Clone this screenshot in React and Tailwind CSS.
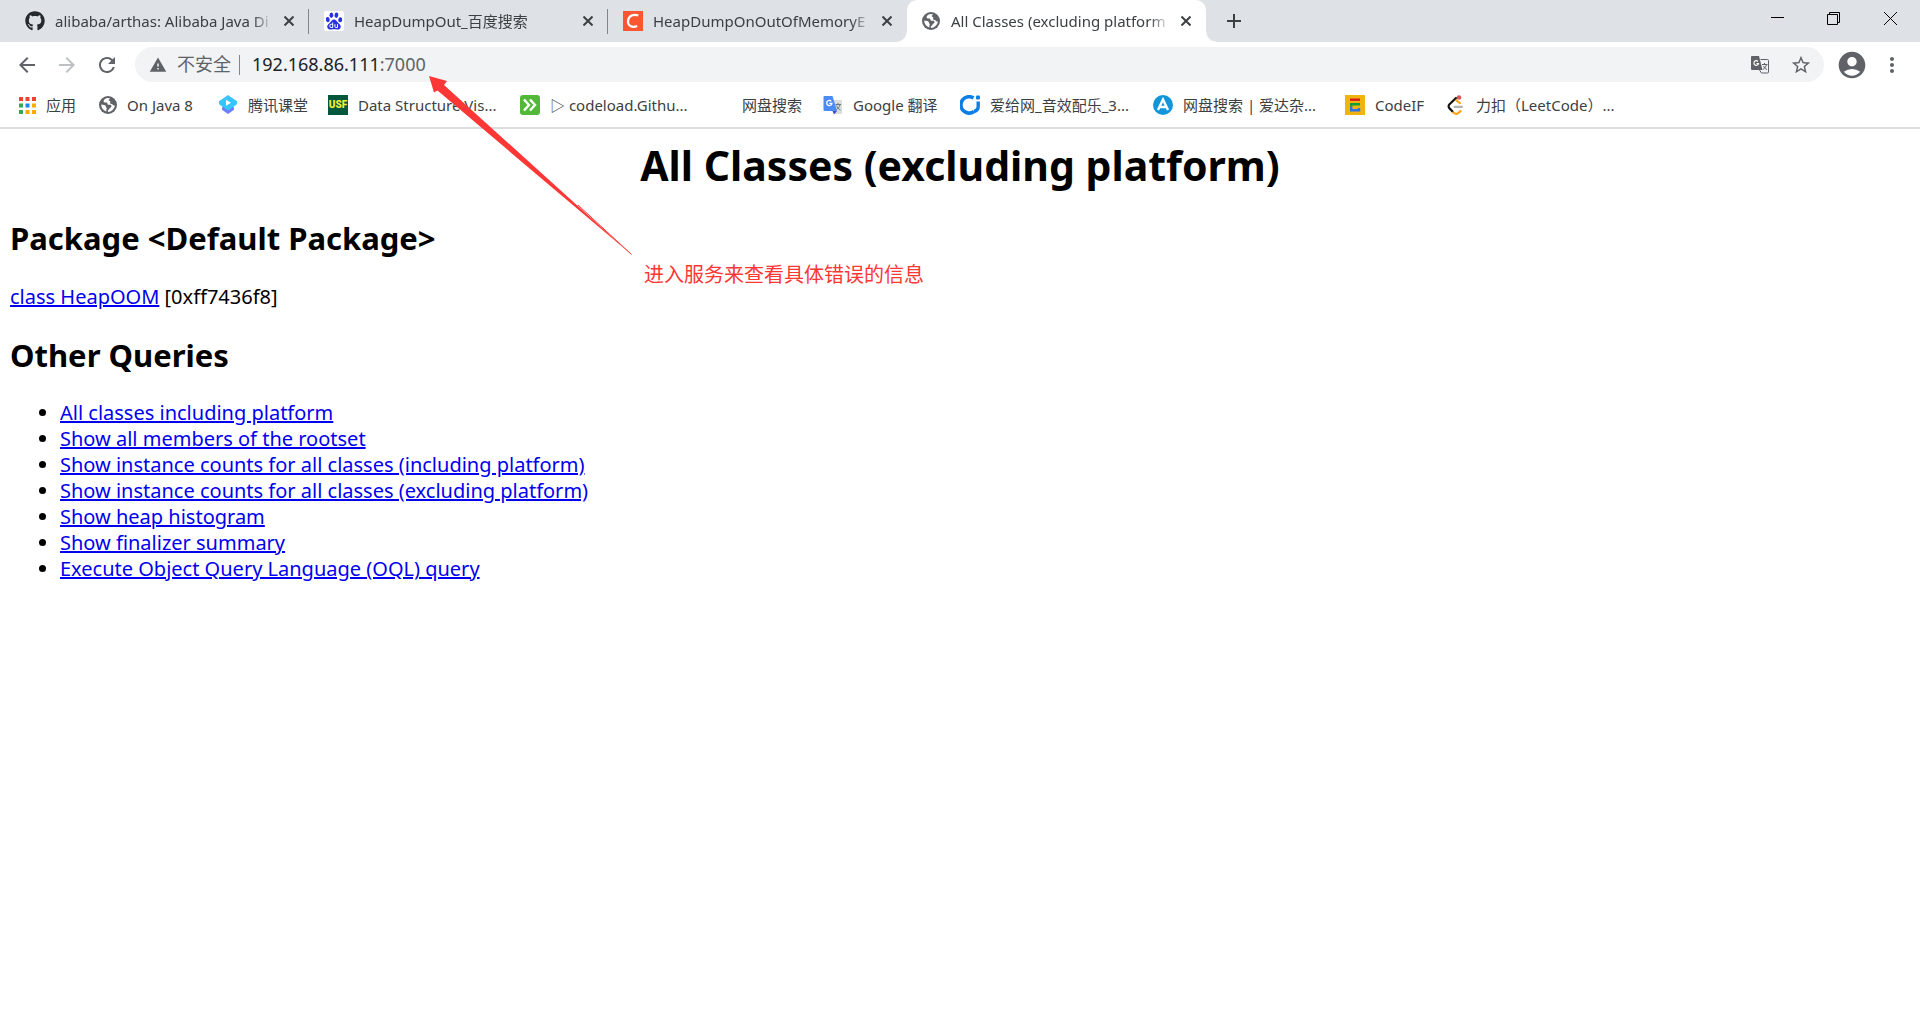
import { FaGithub } from "react-icons/fa";
import {
  MdArrowBack,
  MdArrowForward,
  MdRefresh,
  MdWarning,
  MdStarBorder,
  MdAccountCircle,
  MdMoreVert,
} from "react-icons/md";

function GlobeIcon() {
  return (
    <svg viewBox="0 0 18 18" className="size-[18px] shrink-0" aria-hidden="true">
      <circle cx="9" cy="9" r="9" fill="#5f6368" />
      <path
        d="M10.6 2.2 8 2C5.500 3 4.600 4 4.600 5.300c0 1.200 1 1.300 2.200 1.300 1.400 0 1.400.4 1.700 1.300.3.800 1 1 2.300.9 1.400-.1 1.800.6 1.600 1.700-.2 1-1.200.9-1.700 1.800-.5.900-.9 1.600-1.900 2.200l.2 1.500c3.400-.4 6.400-3 6.900-6.600-1 .2-2-.1-2.400-.9-.5-.9-1.600-.2-2.200-1-.6-.9.300-1.500-.1-2.300-.4-.7-1.600-.3-1.500-1.300.1-.8 1.300-.7 1.300-1.700Z"
        fill="#fff"
      />
      <path
        d="M2.200 8.600c1.400.3 2.900.2 4 .8 1.100.6.500 1.700 1.300 2.300.7.500.2 1.200-.2 1.700l.1 2.100c-2.900-.7-5.200-3.300-5.200-6.900Z"
        fill="#fff"
      />
    </svg>
  );
}

function BaiduIcon() {
  return (
    <svg viewBox="0 0 20 20" className="size-5 shrink-0" aria-hidden="true">
      <rect width="20" height="20" rx="2" fill="#fff" />
      <g fill="#2932e1">
        <ellipse cx="3.800" cy="8.600" rx="1.900" ry="2.600" transform="rotate(-12 3.800 8.600)" />
        <ellipse cx="7.400" cy="4.200" rx="1.900" ry="2.700" />
        <ellipse cx="12.400" cy="4.200" rx="1.900" ry="2.700" transform="rotate(8 12.400 4.200)" />
        <ellipse cx="16.200" cy="8.800" rx="1.900" ry="2.500" transform="rotate(10 16.200 8.800)" />
        <path d="M10 8.500c2.200 0 2.700 2 4.300 3.400 1.700 1.500 2.700 2.600 2.400 4.300-.3 2-2 2.500-3.700 2.300-1-.1-2-.3-3-.3s-2 .2-3 .3c-1.700.2-3.400-.3-3.700-2.300-.3-1.700.7-2.800 2.400-4.300C7.300 10.500 7.800 8.500 10 8.500Z" />
      </g>
      <path
        d="M8.700 11.500v5H7.300a1.500 1.500 0 0 1 0-3.200h1.400M10.900 13.200v2.200c0 .8.400 1.100 1.200 1.100h1.400v-3.300"
        fill="none"
        stroke="#fff"
        strokeWidth="1"
      />
    </svg>
  );
}

function CsdnIcon() {
  return (
    <svg viewBox="0 0 20 20" className="size-5 shrink-0" aria-hidden="true">
      <rect width="20" height="20" fill="#fc5531" />
      <path
        d="M15.300 4.600C11 2.600 5.400 4.500 5 10.100c-.3 5.300 4.800 6.700 9.200 4.900"
        fill="none"
        stroke="#fff"
        strokeWidth="2.200"
      />
    </svg>
  );
}

function AppsIcon() {
  const rows = [
    ["#ea4335", "#ea4335", "#ea4335"],
    ["#34a853", "#1a88f4", "#fbab04"],
    ["#34a853", "#fbab04", "#fbab04"],
  ];
  return (
    <svg viewBox="0 0 17 17" className="size-[17px] shrink-0" aria-hidden="true">
      {rows.map((row, y) =>
        row.map((color, x) => (
          <rect key={`${x}-${y}`} x={x * 6.500} y={y * 6.500} width="4" height="4" fill={color} />
        ))
      )}
    </svg>
  );
}

function TencentIcon() {
  return (
    <svg viewBox="0 0 20 20" className="size-5 shrink-0" aria-hidden="true">
      <path d="M4 12.500 10 9l6 3.500v2.300L10 19l-6-4.200Z" fill="#6e7dfa" />
      <path d="M10 0 19 6.200v3L10 15.500 1 9.200v-3Z" fill="#35c6fb" />
      <path d="M8 4.800 13 7.700 8 10.800Z" fill="#fff" />
    </svg>
  );
}

function UsfIcon() {
  return (
    <span
      className="flex h-5 w-5 shrink-0 items-center justify-center bg-[#00573c] font-['Roboto',sans-serif] text-[10px] leading-5 font-black text-[#f5ee31]"
      aria-hidden="true"
    >
      USF
    </span>
  );
}

function ChevronsIcon() {
  return (
    <svg viewBox="0 0 20 20" className="size-5 shrink-0" aria-hidden="true">
      <rect width="20" height="20" rx="3" fill="#52b838" />
      <path d="m4 4.500 5 5.500-5 5.500M10 4.500l5 5.500-5 5.500" fill="none" stroke="#fff" strokeWidth="2.400" />
    </svg>
  );
}

function GoogleTranslateIcon() {
  return (
    <svg viewBox="0 0 20 20" className="size-5 shrink-0" aria-hidden="true">
      <path d="M8 5h10a1 1 0 0 1 1 1v12a1 1 0 0 1-1 1h-6Z" fill="#dcdcdc" />
      <path d="M9.500 16H14l-3 3.500Z" fill="#3a4fbf" />
      <path d="M1.500 1h8l4.500 15H1.500a1 1 0 0 1-1-1V2a1 1 0 0 1 1-1Z" fill="#4c8bf5" />
      <path d="M8.300 6.300a2.600 2.600 0 1 0 .6 2H6.300" fill="none" stroke="#fff" strokeWidth="1.300" />
      <path
        d="M12.500 9.500H18M15 8v1.500M17 9.500c-.5 2.500-2 4.300-4 5.500M13.500 10.500c.8 2 2 3.500 4 4.500"
        fill="none"
        stroke="#607d8b"
        strokeWidth="1"
      />
    </svg>
  );
}

function AigeiIcon() {
  return (
    <svg viewBox="0 0 20 20" className="size-5 shrink-0" aria-hidden="true">
      <path d="M13.500 3A8.200 8.200 0 1 0 14 16.500" fill="none" stroke="#0b7fe6" strokeWidth="3.600" />
      <path d="M18.200 6.500v5c0 2.500-1.700 4.300-4.200 5" fill="none" stroke="#0b7fe6" strokeWidth="3.400" />
      <rect x="16" y="0.500" width="4" height="4" rx="1" fill="#0b7fe6" />
    </svg>
  );
}

function AidaIcon() {
  return (
    <svg viewBox="0 0 20 20" className="size-5 shrink-0" aria-hidden="true">
      <circle cx="10" cy="10" r="10" fill="#1296db" />
      <path d="m5 15 5-10.500L15 15M7 12h6" fill="none" stroke="#fff" strokeWidth="2.400" />
    </svg>
  );
}

function CodeIfIcon() {
  return (
    <svg viewBox="0 0 20 20" className="size-5 shrink-0" aria-hidden="true">
      <rect width="20" height="20" fill="#f0b310" />
      <path d="M5 4.700h10" stroke="#d7191c" strokeWidth="2.400" />
      <path d="M15 9.200H6.200v2.600" fill="none" stroke="#0f9d39" strokeWidth="2.400" />
      <path d="M6.200 11.800v3.400H14V13" fill="none" stroke="#2f6fe8" strokeWidth="2.400" />
    </svg>
  );
}

function LeetCodeIcon() {
  return (
    <svg viewBox="0 0 20 20" className="size-5 shrink-0" aria-hidden="true" fill="none" strokeLinecap="round">
      <path d="m10 3-6.500 6.300c-1.200 1.200-1.200 2.900 0 4.100l3.300 3.400" stroke="#111" strokeWidth="2.200" />
      <path d="m10.500 5.500 3.500 2.700M7.300 17.500c2.200 2 4.300 1.800 6.200-.5l1-1" stroke="#ffa116" strokeWidth="2.200" />
      <path d="M8.500 11.800H16" stroke="#b3b3b3" strokeWidth="2.200" />
      <circle cx="13" cy="2.500" r="2.300" fill="#e0525a" />
    </svg>
  );
}

function PageTranslateIcon() {
  return (
    <svg viewBox="0 0 20 20" className="size-5" aria-hidden="true">
      <path d="M2 1h7l3.500 14H2a1 1 0 0 1-1-1V2a1 1 0 0 1 1-1Z" fill="#5f6368" />
      <path d="M10.500 4.500h7a1 1 0 0 1 1 1V17a1 1 0 0 1-1 1h-6L9.500 15" fill="none" stroke="#5f6368" />
      <path d="M8 6.500a2.300 2.300 0 1 0 .5 2H6.500" fill="none" stroke="#fff" strokeWidth="1.200" />
      <path
        d="M12 9.500h5.500M14.500 8v1.500M16.500 9.500c-.5 2-1.500 3.800-3.500 5M13.500 11c.8 1.600 1.800 2.800 3.500 3.600"
        fill="none"
        stroke="#5f6368"
      />
    </svg>
  );
}

const tabs = [
  { title: "alibaba/arthas: Alibaba Java Di", icon: <FaGithub className="size-5 shrink-0 text-[#24292e]" /> },
  { title: "HeapDumpOut_百度搜索", icon: <BaiduIcon /> },
  { title: "HeapDumpOnOutOfMemoryE", icon: <CsdnIcon /> },
];

function CloseButton() {
  return (
    <button type="button" aria-label="关闭标签页" className="ml-[6px] flex size-5 shrink-0 items-center justify-center">
      <svg viewBox="0 0 10 10" className="size-[10px]" aria-hidden="true">
        <path d="m.500.500 9 9M9.500.500l-9 9" stroke="#3c4043" strokeWidth="2" />
      </svg>
    </button>
  );
}

const fade =
  "min-w-0 flex-1 whitespace-nowrap [mask-image:linear-gradient(to_right,black_calc(100%-20px),transparent)]";

function TabStrip() {
  return (
    <header className="flex h-[42px] bg-[#dee1e6] text-[#3c4043]">
      <div className="flex min-w-0 pl-[10px]">
        {tabs.map((tab, i) => (
          <div key={tab.title} className="flex w-[299px] items-center">
            <div className="flex min-w-0 flex-1 items-center pr-[9px] pl-[15px]">
              {tab.icon}
              <span className={`ml-[10px] ${fade}`}>{tab.title}</span>
              <CloseButton />
            </div>
            <span className={i < 2 ? "h-[25px] w-px bg-[#80868b]" : "w-px"} />
          </div>
        ))}
        <div className="relative flex w-[299px] items-center rounded-t-[10px] bg-white pr-[10px] pl-[15px]">
          <span className="absolute bottom-0 -left-[10px] size-[10px] bg-[radial-gradient(circle_at_0_0,transparent_9px,white_10px)]" />
          <span className="absolute -right-[10px] bottom-0 size-[10px] bg-[radial-gradient(circle_at_100%_0,transparent_9px,white_10px)]" />
          <GlobeIcon />
          <span className={`ml-[11px] ${fade}`}>All Classes (excluding platform</span>
          <CloseButton />
        </div>
      </div>
      <button type="button" aria-label="打开新的标签页" className="ml-[18px] flex w-5 items-center justify-center">
        <svg viewBox="0 0 16 16" className="size-4" aria-hidden="true">
          <path d="M8 1v14M1 8h14" stroke="#3c4043" strokeWidth="2" />
        </svg>
      </button>
      <div className="ml-auto flex h-9">
        <button type="button" aria-label="最小化" className="flex w-14 items-center justify-center">
          <svg viewBox="0 0 13 13" className="size-[13px]" aria-hidden="true">
            <path d="M0 5.500h13" stroke="#000" />
          </svg>
        </button>
        <button type="button" aria-label="还原" className="flex w-14 items-center justify-center">
          <svg viewBox="0 0 13 13" className="size-[13px]" aria-hidden="true">
            <path d="M.500 2.500h10v10H.500ZM2.500 2.500V.500h10v10h-2" fill="none" stroke="#000" />
          </svg>
        </button>
        <button type="button" aria-label="关闭" className="flex w-[59px] items-center justify-center">
          <svg viewBox="0 0 13 13" className="size-[13px]" aria-hidden="true">
            <path d="m0 0 13 13M13 0 0 13" stroke="#000" />
          </svg>
        </button>
      </div>
    </header>
  );
}

function Toolbar() {
  return (
    <nav aria-label="工具栏" className="flex h-[45px] items-center pr-4 pl-[15px] text-[#5f6368]">
      <button type="button" aria-label="返回" className="mr-4"><MdArrowBack className="size-6" /></button>
      <button type="button" aria-label="前进" className="mr-4 text-[#bdc1c6]"><MdArrowForward className="size-6" /></button>
      <button type="button" aria-label="重新加载" className="mr-4"><MdRefresh className="size-6" /></button>
      <div className="flex h-[35px] min-w-0 flex-1 items-center rounded-full bg-[#f1f3f4] pr-3 pl-[14px] text-[18px]">
        <MdWarning className="size-[18px] shrink-0" />
        <span className="ml-[10px] shrink-0">不安全</span>
        <span className="mr-3 ml-2 h-5 w-px shrink-0 bg-[#80868b]" />
        <div className="grid min-w-0 flex-1 items-center">
          <input
            aria-label="地址"
            defaultValue="192.168.86.111:7000"
            className="col-start-1 row-start-1 w-full bg-transparent text-transparent outline-none"
          />
          <span aria-hidden="true" className="pointer-events-none col-start-1 row-start-1">
            <span className="text-[#202124]">192.168.86.111</span>:7000
          </span>
        </div>
        <button type="button" aria-label="翻译此页" className="mr-5"><PageTranslateIcon /></button>
        <button type="button" aria-label="为此标签页添加书签"><MdStarBorder className="size-[22px]" /></button>
      </div>
      <button type="button" aria-label="用户" className="ml-3"><MdAccountCircle className="size-8" /></button>
      <button type="button" aria-label="自定义及控制" className="ml-3"><MdMoreVert className="size-6" /></button>
    </nav>
  );
}

const bookmarks = [
  { name: "应用", icon: <AppsIcon />, width: "w-[80px]" },
  { name: "On Java 8", icon: <GlobeIcon />, width: "w-[119px]" },
  { name: "腾讯课堂", icon: <TencentIcon />, width: "w-[110px]" },
  { name: "Data Structure Vis...", icon: <UsfIcon />, width: "w-[192px]" },
  { name: "▷ codeload.Githu...", icon: <ChevronsIcon />, width: "w-[192px]" },
  { name: "网盘搜索", icon: <span className="size-5" />, width: "w-[111px]" },
  { name: "Google 翻译", icon: <GoogleTranslateIcon />, width: "w-[137px]" },
  { name: "爱给网_音效配乐_3...", icon: <AigeiIcon />, width: "w-[193px]" },
  { name: "网盘搜索 | 爱达杂...", icon: <AidaIcon />, width: "w-[192px]" },
  { name: "CodeIF", icon: <CodeIfIcon />, width: "w-[101px]" },
  { name: "力扣（LeetCode）...", icon: <LeetCodeIcon />, width: "w-[192px]" },
];

function BookmarksBar() {
  return (
    <nav
      aria-label="书签"
      className="flex h-[42px] items-center overflow-hidden border-b-2 border-[#dadce0] pb-1 pl-[19px] text-[#3c4043]"
    >
      {bookmarks.map((b, i) => (
        <a key={i} href="#" className={`flex shrink-0 items-center gap-[10px] whitespace-nowrap ${b.width}`}>
          {b.icon}
          {b.name}
        </a>
      ))}
    </nav>
  );
}

const queries = [
  "All classes including platform",
  "Show all members of the rootset",
  "Show instance counts for all classes (including platform)",
  "Show instance counts for all classes (excluding platform)",
  "Show heap histogram",
  "Show finalizer summary",
  "Execute Object Query Language (OQL) query",
];

function Annotation() {
  return (
    <div className="pointer-events-none absolute top-[75px] left-[428px] text-[#fd3636]">
      <svg width="206" height="184" viewBox="0 0 206 184" aria-hidden="true">
        <path d="M1 1 19 6 16 10 204 180 9.500 15.500 6 17.500Z" fill="currentColor" />
        <path d="M150 130 203.500 179.500" stroke="currentColor" />
      </svg>
      <p className="ml-[216px] text-[20px] leading-8 whitespace-nowrap">进入服务来查看具体错误的信息</p>
    </div>
  );
}

export default function App() {
  return (
    <div className="relative min-h-screen bg-white font-['Noto_Sans','Noto_Sans_CJK_SC',sans-serif] text-[15px]">
      <TabStrip />
      <Toolbar />
      <BookmarksBar />
      <main className="px-[10px] pt-2 text-[20px] leading-[26px] text-black">
        <h1 className="text-center text-[41px] leading-[56px] font-bold">All Classes (excluding platform)</h1>
        <h2 className="mt-[25px] text-[31px] leading-[41px] font-bold">Package &lt;Default Package&gt;</h2>
        <p className="mt-[25px]">
          <a href="#" className="text-[#0000ee] underline">class HeapOOM</a> [0xff7436f8]
        </p>
        <h2 className="mt-[25px] text-[31px] leading-[41px] font-bold">Other Queries</h2>
        <ul className="mt-6 list-disc pl-[50px]">
          {queries.map((q) => (
            <li key={q}>
              <a href="#" className="text-[#0000ee] underline">{q}</a>
            </li>
          ))}
        </ul>
      </main>
      <Annotation />
    </div>
  );
}
